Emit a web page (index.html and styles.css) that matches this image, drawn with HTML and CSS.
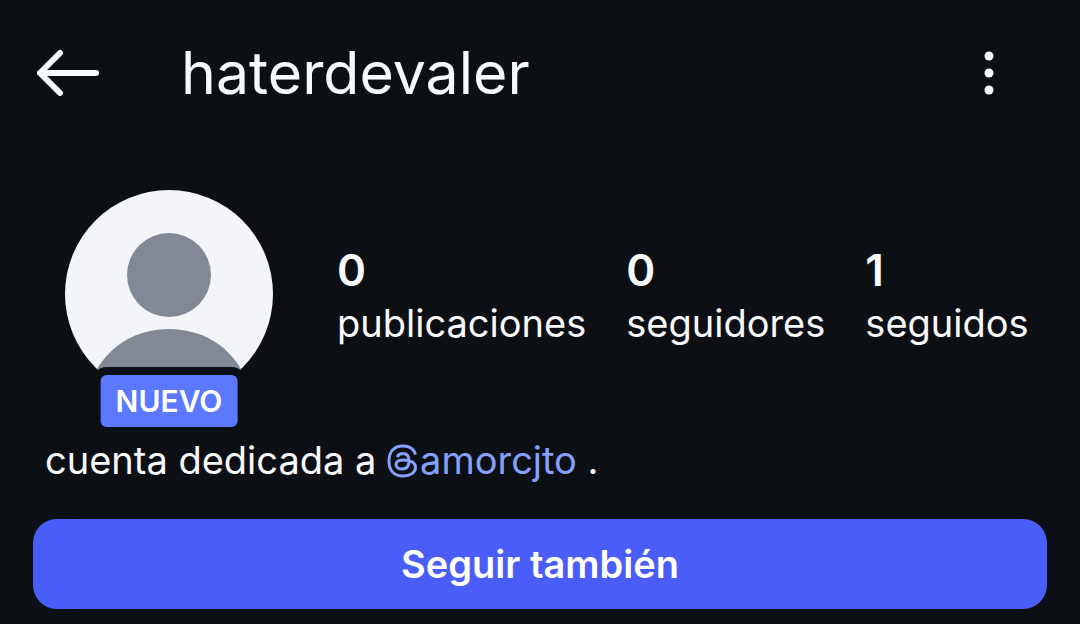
FILE: index.html
```
<!DOCTYPE html>
<html lang="es">
<head>
    <meta charset="UTF-8">
    <meta name="viewport" content="width=device-width, initial-scale=1.0">
    <title>haterdevaler</title>
    <link rel="stylesheet" href="styles.css">
</head>
<body>
    <header class="topbar">
        <button class="icon-btn" type="button" aria-label="Volver">
            <svg width="64" height="48" viewBox="0 0 64 48">
                <path d="M24 4L4 24L24 44M4 24H60" />
            </svg>
        </button>
        <h1 class="username">haterdevaler</h1>
        <button class="icon-btn menu-btn" type="button" aria-label="Opciones">
            <svg class="dots" width="10" height="44" viewBox="0 0 10 44">
                <circle cx="5" cy="5" r="4.5" />
                <circle cx="5" cy="22" r="4.5" />
                <circle cx="5" cy="39" r="4.5" />
            </svg>
        </button>
    </header>

    <main>
        <section class="profile">
            <div class="avatar">
                <svg class="avatar-img" viewBox="0 0 208 208">
                    <circle class="avatar-bg" cx="104" cy="104" r="104" />
                    <circle cx="104" cy="85" r="42" />
                    <path d="M32 179C46 155 72 139 104 139S162 155 176 179A104 104 0 0 1 32 179Z" />
                </svg>
                <span class="badge">NUEVO</span>
            </div>
            <ul class="stats">
                <li><strong>0</strong>publicaciones</li>
                <li><strong>0</strong>seguidores</li>
                <li><strong>1</strong>seguidos</li>
            </ul>
        </section>

        <p class="bio">cuenta dedicada a <a href="#amorcjto"><svg class="threads" width="33" height="34" viewBox="0 0 33 34"><path d="M28.500 10.500C27 5 23 2 16 2C7 2 2 7.500 2 17S7 32 16 32C23.500 32 28.500 28.500 28.500 23.500C28.500 18.500 23 16 16.500 16C11.500 16 9 18 9 20.700C9 23.500 11.800 25 15 25C19.500 25 22 22 22 17C22 12 20 9.500 16 9.500C13.300 9.500 11.300 10.500 10 13" /></svg>amorcjto</a> .</p>

        <button class="follow-btn" type="button">Seguir también</button>
    </main>
</body>
</html>
```
FILE: styles.css
```
* {
    box-sizing: border-box;
}
body {
    margin: 0;
    background-color: #0c1014;
    color: #f8f9fb;
    font-family: Inter, "Liberation Sans", sans-serif;
    font-size: 38px;
    line-height: 48px;
}
button {
    border: none;
    font-family: inherit;
    color: inherit;
    cursor: pointer;
}
.topbar {
    display: flex;
    align-items: center;
    padding: 37px 86px 35px 36px;
}
.icon-btn {
    display: flex;
    padding: 0;
    background: none;
}
.icon-btn path {
    fill: none;
    stroke: #f8f9fb;
    stroke-width: 6;
    stroke-linecap: round;
    stroke-linejoin: round;
}
.dots {
    fill: #f8f9fb;
}
.username {
    margin: 0 0 0 81px;
    font-size: 59px;
    font-weight: 400;
    line-height: 72px;
}
.menu-btn {
    margin-left: auto;
}
.profile {
    display: flex;
    align-items: center;
    gap: 64px;
    padding: 46px 48px 0 65px;
}
.avatar {
    position: relative;
    flex: none;
    width: 208px;
    height: 208px;
}
.avatar-img {
    display: block;
    fill: #838994;
}
.avatar-bg {
    fill: #f3f5f8;
}
/* The border cuts the badge out of the avatar */
.badge {
    position: absolute;
    bottom: -37px;
    left: 50%;
    transform: translateX(-50%);
    padding: 0 15px;
    border: 8px solid #0c1014;
    border-radius: 14px;
    background-color: #5b78ff;
    color: #fff;
    font-size: 30px;
    font-weight: 600;
    line-height: 52px;
}
.stats {
    display: flex;
    gap: 40px;
    margin: 0;
    padding: 0;
    list-style: none;
}
.stats strong {
    display: block;
    font-size: 44px;
    font-weight: 600;
    line-height: 58px;
}
.bio {
    margin: 38px 45px 35px;
}
.bio a {
    color: #85a1ff;
    text-decoration: none;
}
.threads {
    vertical-align: -4px;
}
.threads path {
    fill: none;
    stroke: #85a1ff;
    stroke-width: 3;
}
.follow-btn {
    display: block;
    width: calc(100% - 66px);
    height: 90px;
    margin: 0 33px 15px;
    border-radius: 24px;
    background-color: #4a5df9;
    color: #fff;
    font-size: 38px;
    font-weight: 600;
}
```
